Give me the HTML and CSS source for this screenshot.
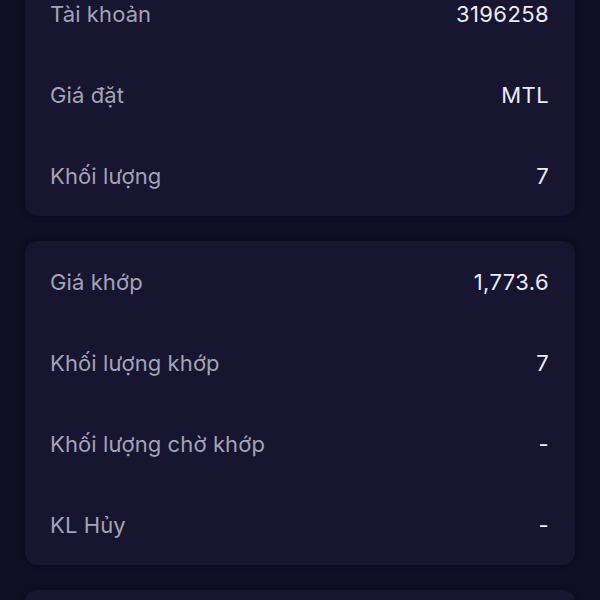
FILE: index.html
```html
<!DOCTYPE html>
<html lang="vi">
<head>
<meta charset="utf-8">
<link rel="stylesheet" href="styles.css">
</head>
<body>
<main class="list">
  <section class="card">
    <div class="row"><span class="label">Tài khoản</span><span class="value">3196258</span></div>
    <div class="row"><span class="label">Giá đặt</span><span class="value">MTL</span></div>
    <div class="row"><span class="label">Khối lượng</span><span class="value">7</span></div>
  </section>
  <section class="card">
    <div class="row"><span class="label">Giá khớp</span><span class="value">1,773.6</span></div>
    <div class="row"><span class="label">Khối lượng khớp</span><span class="value">7</span></div>
    <div class="row"><span class="label">Khối lượng chờ khớp</span><span class="value">-</span></div>
    <div class="row"><span class="label">KL Hủy</span><span class="value">-</span></div>
  </section>
  <section class="card card-empty"></section>
</main>
</body>
</html>
```

FILE: styles.css
```css
html, body {
  margin: 0;
  padding: 0;
  background: #0f0e23;
  height: 100%;
  overflow: hidden;
}
body {
  font-family: Inter, "Noto Sans", sans-serif;
}
.list {
  display: flex;
  flex-direction: column;
  gap: 25px;
  padding: 0 25px;
  margin-top: -27px;
}
.card {
  background: #17152f;
  border-radius: 12px;
  padding: 0 26px 0 25px;
  box-shadow: 0 0 6px rgba(0, 0, 0, 0.25);
}
.card-empty {
  height: 81px;
}
.row {
  height: 81px;
  display: flex;
  align-items: center;
  justify-content: space-between;
  font-size: 22px;
  letter-spacing: 0.1px;
}
.label {
  color: #a4a3b8;
}
.value {
  color: #ececf4;
  letter-spacing: 0.4px;
}
```
